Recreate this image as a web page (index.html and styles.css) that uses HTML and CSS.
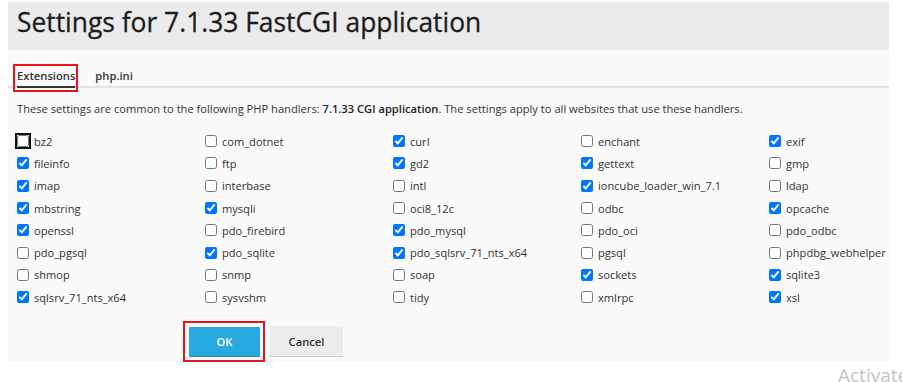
FILE: index.html
```html
<!DOCTYPE html>
<html lang="en">
<head>
<meta charset="utf-8">
<title>Settings for 7.1.33 FastCGI application</title>
<link rel="stylesheet" href="styles.css">
</head>
<body>
<div class="panel">
  <div class="header"><h1 class="title">Settings for 7.1.33 FastCGI application</h1></div>
  <div class="content">
    <div class="tabs">
      <span class="tab active marked">Extensions</span>
      <span class="tab">php.ini</span>
    </div>
    <p class="desc">These settings are common to the following PHP handlers: <b>7.1.33 CGI application</b>. The settings apply to all websites that use these handlers.</p>
    <div class="grid">
      <label class="item"><input type="checkbox" class="focus"><span>bz2</span></label>
      <label class="item"><input type="checkbox"><span>com_dotnet</span></label>
      <label class="item"><input type="checkbox" checked><span>curl</span></label>
      <label class="item"><input type="checkbox"><span>enchant</span></label>
      <label class="item"><input type="checkbox" checked><span>exif</span></label>

      <label class="item"><input type="checkbox" checked><span>fileinfo</span></label>
      <label class="item"><input type="checkbox"><span>ftp</span></label>
      <label class="item"><input type="checkbox" checked><span>gd2</span></label>
      <label class="item"><input type="checkbox" checked><span>gettext</span></label>
      <label class="item"><input type="checkbox"><span>gmp</span></label>

      <label class="item"><input type="checkbox" checked><span>imap</span></label>
      <label class="item"><input type="checkbox"><span>interbase</span></label>
      <label class="item"><input type="checkbox"><span>intl</span></label>
      <label class="item"><input type="checkbox" checked><span>ioncube_loader_win_7.1</span></label>
      <label class="item"><input type="checkbox"><span>ldap</span></label>

      <label class="item"><input type="checkbox" checked><span>mbstring</span></label>
      <label class="item"><input type="checkbox" checked><span>mysqli</span></label>
      <label class="item"><input type="checkbox"><span>oci8_12c</span></label>
      <label class="item"><input type="checkbox"><span>odbc</span></label>
      <label class="item"><input type="checkbox" checked><span>opcache</span></label>

      <label class="item"><input type="checkbox" checked><span>openssl</span></label>
      <label class="item"><input type="checkbox"><span>pdo_firebird</span></label>
      <label class="item"><input type="checkbox" checked><span>pdo_mysql</span></label>
      <label class="item"><input type="checkbox"><span>pdo_oci</span></label>
      <label class="item"><input type="checkbox"><span>pdo_odbc</span></label>

      <label class="item"><input type="checkbox"><span>pdo_pgsql</span></label>
      <label class="item"><input type="checkbox" checked><span>pdo_sqlite</span></label>
      <label class="item"><input type="checkbox" checked><span>pdo_sqlsrv_71_nts_x64</span></label>
      <label class="item"><input type="checkbox"><span>pgsql</span></label>
      <label class="item"><input type="checkbox"><span>phpdbg_webhelper</span></label>

      <label class="item"><input type="checkbox"><span>shmop</span></label>
      <label class="item"><input type="checkbox"><span>snmp</span></label>
      <label class="item"><input type="checkbox"><span>soap</span></label>
      <label class="item"><input type="checkbox" checked><span>sockets</span></label>
      <label class="item"><input type="checkbox" checked><span>sqlite3</span></label>

      <label class="item"><input type="checkbox" checked><span>sqlsrv_71_nts_x64</span></label>
      <label class="item"><input type="checkbox"><span>sysvshm</span></label>
      <label class="item"><input type="checkbox"><span>tidy</span></label>
      <label class="item"><input type="checkbox"><span>xmlrpc</span></label>
      <label class="item"><input type="checkbox" checked><span>xsl</span></label>
    </div>
    <div class="buttons">
      <button class="btn btn-primary marked-btn" type="button">OK</button>
      <button class="btn btn-default" type="button">Cancel</button>
    </div>
  </div>
</div>
<div class="watermark">Activate</div>
</body>
</html>
```

FILE: styles.css
```css
html, body {
  margin: 0;
  padding: 0;
  background: #ffffff;
  overflow: hidden;
}
body {
  width: 902px;
  height: 382px;
  position: relative;
  font-family: "Open Sans", "Noto Sans", sans-serif;
  color: #333333;
}
.panel {
  margin: 2px 0 0 8px;
  width: 881px;
}
.header {
  background: #ebebeb;
  height: 48px;
  padding-left: 9px;
  box-sizing: border-box;
}
.title {
  margin: 0;
  font-size: 26.4px;
  font-weight: 400;
  line-height: 40px;
  color: #1c1c1c;
  -webkit-text-stroke: 0.3px #1c1c1c;
}
.content {
  background: #fafafa;
  padding: 17px 0 5px 9px;
}
.tabs {
  display: flex;
  gap: 20px;
  border-bottom: 2px solid #e2e2e2;
  margin-left: -9px;
  padding-left: 9px;
}
.tab {
  position: relative;
  font-size: 11.2px;
  font-weight: 600;
  line-height: 18px;
  padding-bottom: 1px;
  margin-bottom: -2px;
  border-bottom: 2px solid transparent;
  color: #333333;
}
.tab.active {
  border-bottom-color: #333333;
}
.marked::after {
  content: "";
  position: absolute;
  left: -4px;
  right: -3px;
  top: -3px;
  bottom: -6px;
  border: 2px solid #e8141b;
}
.desc {
  margin: 13px 0 0;
  font-size: 11.15px;
  line-height: 16px;
  color: #333333;
}
.desc b {
  font-weight: 600;
  color: #222222;
}
.grid {
  margin-top: 13px;
  display: grid;
  grid-template-columns: repeat(5, 188px);
  grid-auto-rows: 22.3px;
}
.item {
  display: flex;
  align-items: center;
  gap: 5px;
  font-size: 11.1px;
  color: #333333;
}
.item input {
  width: 12px;
  height: 12px;
  margin: 0;
  flex: none;
}
.item input.focus {
  outline: 2px solid #111111;
  outline-offset: 0;
  border-radius: 3px;
}
.buttons {
  display: flex;
  gap: 10px;
  margin: 19px 0 0 172px;
  align-items: flex-start;
}
.btn {
  font-family: "Open Sans", "Noto Sans", sans-serif;
  font-size: 11.2px;
  font-weight: 600;
  border: 0;
  border-radius: 1px;
  cursor: pointer;
  padding: 0;
}
.btn-primary {
  position: relative;
  width: 71px;
  height: 30px;
  background: #28aae1;
  border-bottom: 1px solid #1f8cbc;
  color: #ffffff;
}
.marked-btn::after {
  content: "";
  position: absolute;
  left: -6px;
  right: -5px;
  top: -6px;
  bottom: -6px;
  border: 2px solid #e8141b;
}
.btn-default {
  width: 73px;
  height: 31px;
  background: #ececec;
  border-bottom: 1px solid #c8c8c8;
  color: #333333;
  margin-top: -1px;
}
.watermark {
  position: absolute;
  left: 838px;
  top: 362px;
  font-family: "Open Sans", "Noto Sans", sans-serif;
  font-size: 19px;
  line-height: 26px;
  color: #c4c4c4;
  white-space: nowrap;
}
```
